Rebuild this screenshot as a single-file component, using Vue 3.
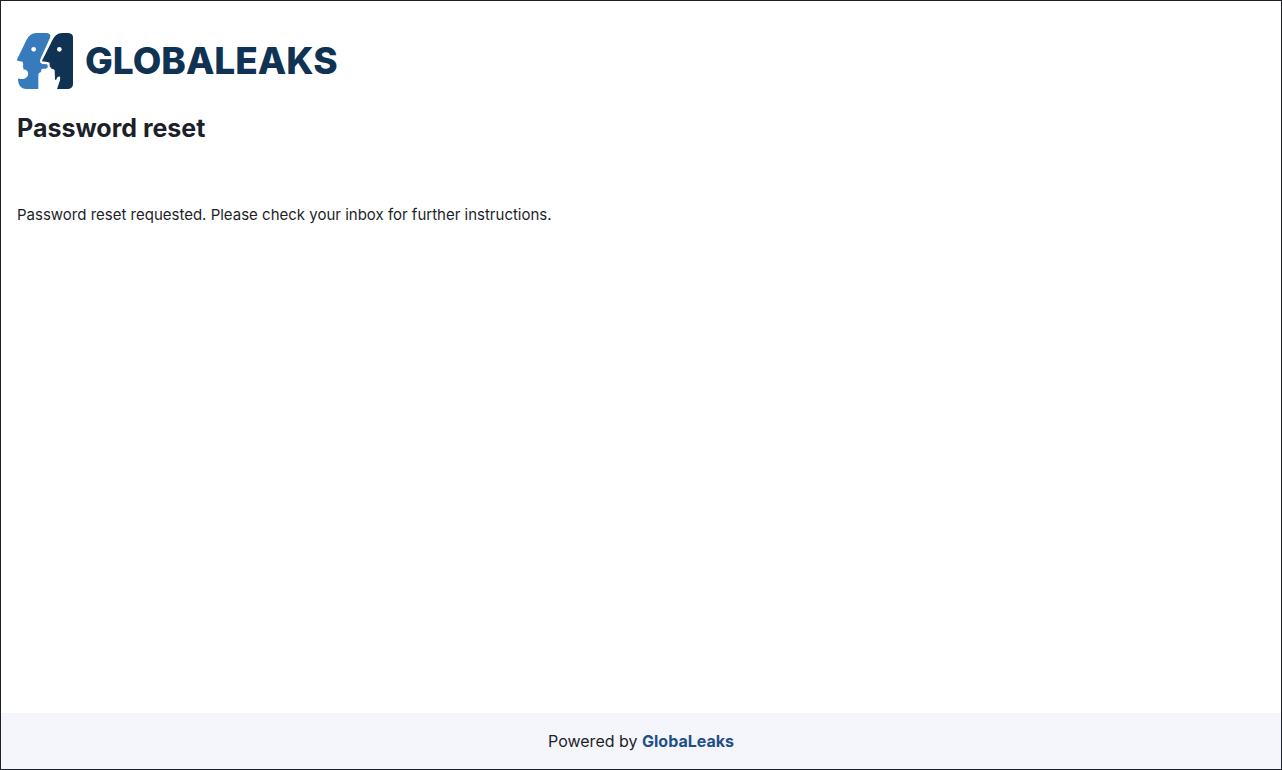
<script setup>
const title = 'Password reset'
const message = 'Password reset requested. Please check your inbox for further instructions.'
</script>

<template>
  <div class="page">
    <header class="header">
      <a class="brand" href="#" aria-label="GlobaLeaks home">
        <svg class="logo" width="324" height="56" viewBox="0 0 324 56" role="img" aria-label="GlobaLeaks">
          <g transform="scale(0.33333)">
            <path
              class="face-left"
              d="M58 0H88Q103 1 99 14L69 81Q67 90 76 93L90 94Q94 98 91 105H88V107H75Q72 109 72 117L66 120Q64 122 64 128V168H28C11 167 4 155 3 140Q4 134 9 138Q26 140 32 129Q37 115 26 110L18 109Q22 105 17 101Q20 98 18 92L17 86L1 83Q-1 81 1 77L28 22Q37 1 58 0Z"
            />
            <path
              class="face-right"
              d="M135 0H154Q168 1 168 13V154Q167 167 154 168H120L129 142Q131 132 127 130Q119 132 117 142L114 139L113 112Q110 107 104 108L102 103Q99 105 98 98V89L91 87L75 85Q76 80 79 76L106 22Q115 1 135 0Z"
            />
            <circle class="eye" cx="50" cy="49" r="7" />
            <circle class="eye" cx="127" cy="49" r="7" />
          </g>
          <text class="wordmark" x="68" y="41">GLOBALEAKS</text>
        </svg>
      </a>
      <h1 class="title">{{ title }}</h1>
    </header>
    <main class="content">
      <p class="message">{{ message }}</p>
    </main>
    <footer class="footer">
      <span>Powered by <a class="footer-link" href="#">GlobaLeaks</a></span>
    </footer>
  </div>
</template>

<style>
body {
  margin: 0;
}
</style>

<style scoped>
.page {
  box-sizing: border-box;
  display: flex;
  flex-direction: column;
  min-height: 100vh;
  border: 1px solid #1d1f2a;
  background: #fff;
  color: #1d1f2a;
  font-family: Inter, "Liberation Sans", sans-serif;
  font-size: 16px;
  line-height: 24px;
}

.header {
  padding: 32px 16px 0;
}

.brand {
  display: inline-block;
}

.logo {
  display: block;
}

.face-left {
  fill: #377bbc;
}

.face-right,
.wordmark {
  fill: #103253;
}

.eye {
  fill: #fff;
}

.wordmark {
  font-size: 37px;
  font-weight: 800;
}

.title {
  margin: 16px 0 0;
  font-size: 25px;
  font-weight: 700;
  line-height: 34px;
}

.content {
  flex: 1;
  padding: 58px 16px 16px;
}

.message {
  margin: 0;
  font-size: 15px;
}

.footer {
  padding: 16px;
  background: #f5f6fb;
  text-align: center;
}

.footer-link {
  color: #1f5088;
  font-weight: 700;
  text-decoration: none;
}
</style>
